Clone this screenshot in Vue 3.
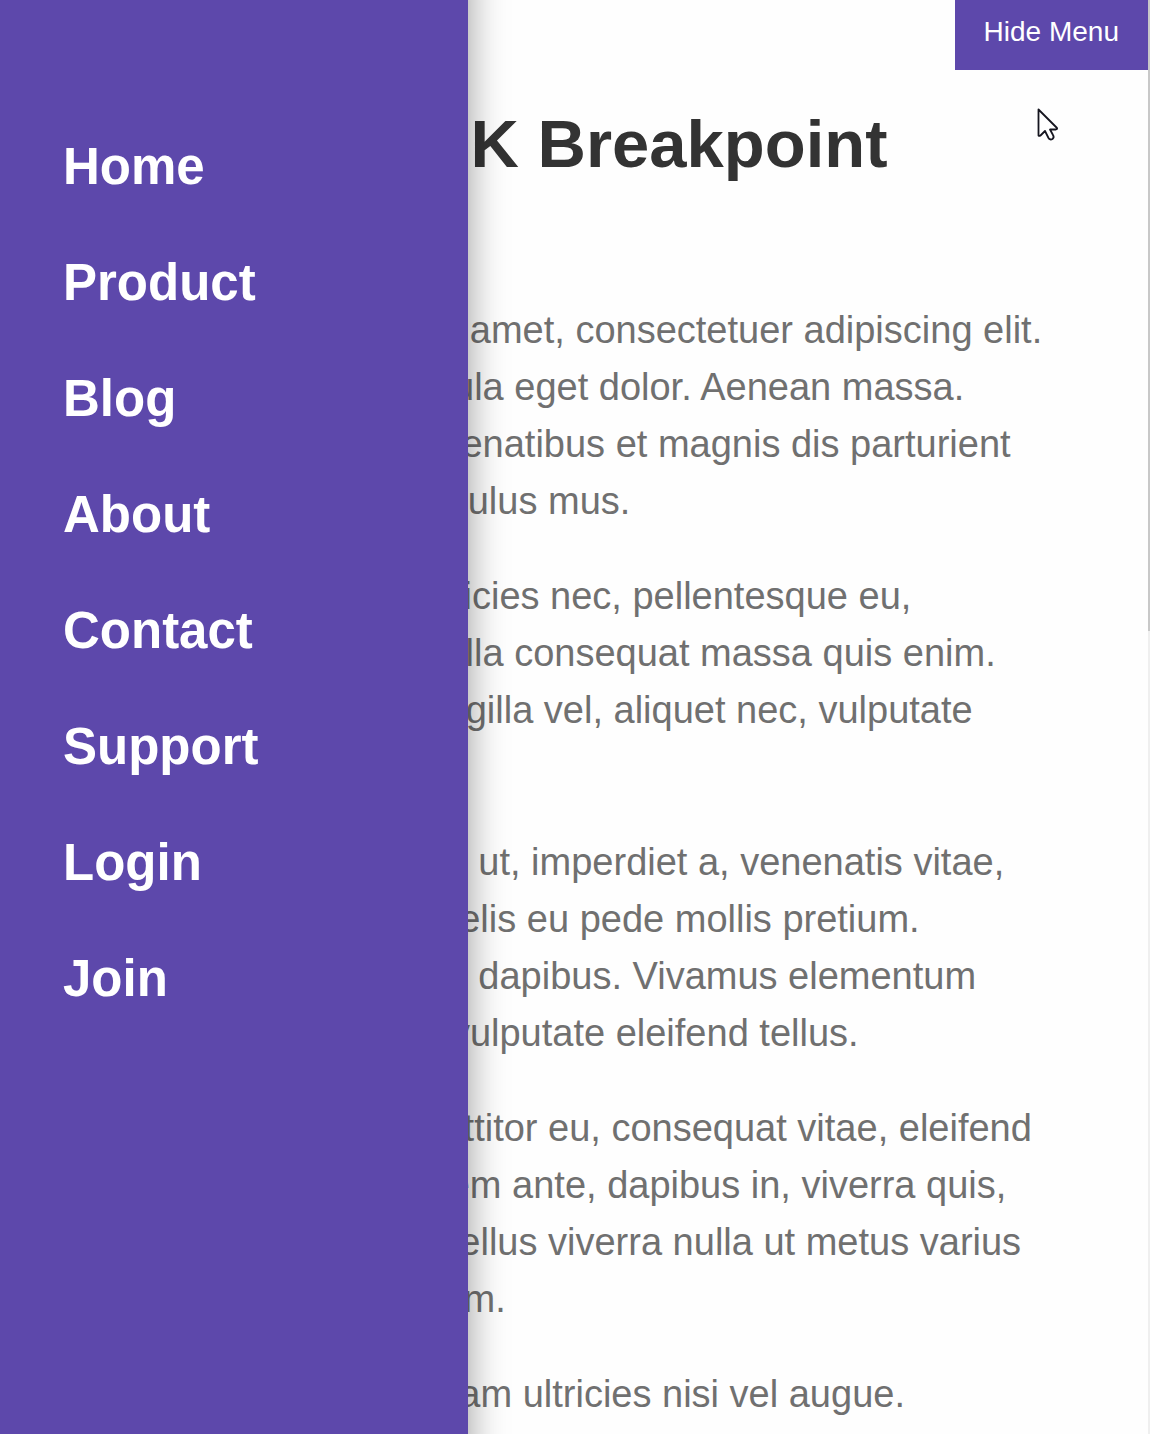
<script setup>
import { ref } from 'vue'

const open = ref(true)
const links = ['Home', 'Product', 'Blog', 'About', 'Contact', 'Support', 'Login', 'Join']
const paragraphs = [
  'Lorem ipsum dolor sit amet, consectetuer adipiscing elit. Aenean commodo ligula eget dolor. Aenean massa. Cum sociis natoque penatibus et magnis dis parturient montes, nascetur ridiculus mus.',
  'Donec quam felis, ultricies nec, pellentesque eu, pretium quis, sem. Nulla consequat massa quis enim. Donec pede justo, fringilla vel, aliquet nec, vulputate eget, arcu.',
  'In enim justo, rhoncus ut, imperdiet a, venenatis vitae, justo. Nullam dictum felis eu pede mollis pretium. Integer tincidunt. Cras dapibus. Vivamus elementum semper nisi. Aenean vulputate eleifend tellus.',
  'Aenean leo ligula, porttitor eu, consequat vitae, eleifend ac, enim. Aliquam lorem ante, dapibus in, viverra quis, feugiat a, tellus. Phasellus viverra nulla ut metus varius laoreet. Quisque rutrum.',
  'Aenean imperdiet. Etiam ultricies nisi vel augue.'
]
</script>

<template>
  <div class="page">
    <nav v-if="open" class="menu" aria-label="Main">
      <ul>
        <li v-for="link in links" :key="link"><a href="#">{{ link }}</a></li>
      </ul>
    </nav>

    <header class="bar">
      <button type="button" :aria-expanded="open" @click="open = !open">
        {{ open ? 'Hide Menu' : 'Show Menu' }}
      </button>
    </header>

    <main>
      <h1>Under K Breakpoint</h1>
      <div class="copy">
        <p v-for="text in paragraphs" :key="text">{{ text }}</p>
      </div>
    </main>

    <div class="scrollbar" aria-hidden="true"><span></span></div>

    <svg class="pointer" width="22" height="34" viewBox="0 0 22 34" aria-hidden="true">
      <path
        d="M1.500 1.500V27.500Q2.500 28.500 4 27L8 23L11.500 30Q13 32.500 15.500 31Q17.500 29.500 16 27L13 21.500H19Q21 21 19.500 19.500Z"
        fill="#fff" stroke="#15151f" stroke-width="1.800" stroke-linejoin="round"
      />
    </svg>
  </div>
</template>

<style>
body {
  background: #fefefe;
}
</style>

<style scoped>
.page {
  position: relative;
  height: 100vh;
  overflow: hidden;
  font-family: "Liberation Sans", Arial, sans-serif;
}

/* Runs past both window edges so the shadow stays even from top to bottom. */
.menu {
  position: absolute;
  inset: -40px auto -40px 0;
  z-index: 2;
  box-sizing: border-box;
  width: 468px;
  padding: 177px 63px;
  background: #5d48ab;
  box-shadow: 0 0 36px rgba(0, 0, 0, 0.4);
}

.menu ul {
  display: flex;
  flex-direction: column;
  gap: 56px;
  margin: 0;
  padding: 0;
  list-style: none;
}

.menu a {
  display: block;
  color: #fff;
  font-size: 51px;
  font-weight: bold;
  line-height: 60px;
  text-decoration: none;
}

.bar {
  display: flex;
  justify-content: flex-end;
  padding-right: 2px;
}

.bar button {
  height: 70px;
  padding: 0 29px 6px;
  border: 0;
  background: #5d48ab;
  color: #fff;
  font-family: inherit;
  font-size: 28px;
}

main {
  padding: 34px 4px 0 0;
}

h1 {
  margin: 0 0 118px;
  color: #333;
  font-size: 67px;
  line-height: 80px;
  text-align: center;
}

.copy {
  padding: 0 100px 0 96px;
}

p {
  margin: 0 0 38px;
  color: #707070;
  font-size: 38px;
  line-height: 57px;
}

.scrollbar {
  position: absolute;
  inset: 0 0 0 auto;
  width: 2px;
  background: #efefef;
}

.scrollbar span {
  display: block;
  height: 44%;
  background: #c8c8c8;
}

.pointer {
  position: absolute;
  top: 108px;
  right: 91px;
}
</style>
